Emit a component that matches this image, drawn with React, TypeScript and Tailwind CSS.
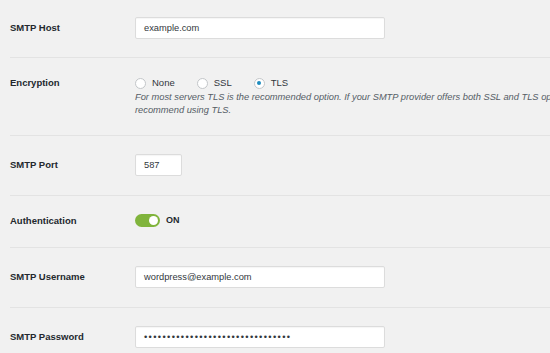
import React from 'react';

const font = { fontFamily: '"Liberation Sans", Arial, sans-serif' };

function Row({ label, children, last = false, first = false }: { label: string; children: React.ReactNode; last?: boolean; first?: boolean }) {
  return (
    <div
      className={`flex items-start ${first ? 'pt-[17px] pb-[18px]' : 'pt-[18px] pb-[19px]'} ${last ? '' : 'border-b border-[#e3e3e3]'}`}
    >
      <div className="w-[125px] shrink-0 text-[9.5px] font-bold leading-[22px] text-[#23282d]">{label}</div>
      <div className="flex-1 min-w-0">{children}</div>
    </div>
  );
}

function TextBox({ value, width = 'w-[250px]', secret = false }: { value: string; width?: string; secret?: boolean }) {
  return (
    <div
      className={`${width} h-[22px] rounded-[2px] border border-[#dcdcdc] bg-white px-[8px] text-[9.3px] leading-[20px] text-[#32373c] shadow-[inset_0_1px_1px_rgba(0,0,0,0.04)] ${
        secret ? 'tracking-[1.35px] text-[#23282d]' : ''
      }`}
    >
      {value}
    </div>
  );
}

function Radio({ label, checked = false }: { label: string; checked?: boolean }) {
  return (
    <div className="flex items-center gap-[6px]">
      <span className="flex h-[11px] w-[11px] items-center justify-center rounded-full border border-[#c3c6c9] bg-white">
        {checked && <span className="h-[4px] w-[4px] rounded-full bg-[#1e8cbe]" />}
      </span>
      <span className="text-[9.5px] text-[#32373c]">{label}</span>
    </div>
  );
}

export default function App() {
  return (
    <div className="h-[353px] w-[550px] overflow-hidden bg-[#f1f1f1] pl-[10px]" style={font}>
      <div className="w-[700px]">
        <Row label="SMTP Host" first>
          <TextBox value="example.com" />
        </Row>

        {/* Encryption */}
        <div className="flex items-start border-b border-[#e3e3e3] pt-[18px] pb-[18px]">
          <div className="w-[125px] shrink-0 text-[9.5px] font-bold leading-[14px] text-[#23282d]">Encryption</div>
          <div className="flex-1">
            <div className="flex h-[14px] items-center gap-[22px]">
              <Radio label="None" />
              <Radio label="SSL" />
              <Radio label="TLS" checked />
            </div>
            <p className="mt-[1px] whitespace-nowrap text-[9.3px] italic leading-[13px] text-[#555d66]">
              For most servers TLS is the recommended option. If your SMTP provider offers both SSL and TLS options, we
              <br />
              recommend using TLS.
            </p>
          </div>
        </div>

        <Row label="SMTP Port">
          <TextBox value="587" width="w-[47px]" />
        </Row>

        {/* Authentication toggle */}
        <div className="flex items-center border-b border-[#e3e3e3] pt-[18px] pb-[19px]">
          <div className="w-[125px] shrink-0 text-[9.5px] font-bold leading-[13px] text-[#23282d]">Authentication</div>
          <div className="flex items-center gap-[6px]">
            <span className="flex h-[13px] w-[25px] items-center justify-end rounded-full bg-[#80b43c] pr-[2px]">
              <span className="h-[9px] w-[9px] rounded-full bg-white" />
            </span>
            <span className="text-[9px] font-bold text-[#23282d]">ON</span>
          </div>
        </div>

        <Row label="SMTP Username">
          <TextBox value="wordpress@example.com" />
        </Row>

        <Row label="SMTP Password" last>
          <TextBox value={'•'.repeat(32)} secret />
        </Row>
      </div>
    </div>
  );
}
